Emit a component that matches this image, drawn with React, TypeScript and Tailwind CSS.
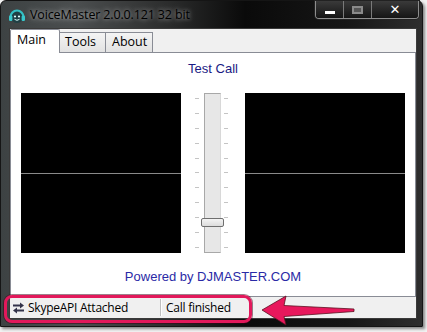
import React from "react";

const font = "font-['Liberation_Sans',Arial,sans-serif]";

function AppIcon() {
  return (
    <svg width="18" height="18" viewBox="0 0 18 18">
      <circle cx="9" cy="9.5" r="6.5" fill="#1f3f44" />
      <path d="M2.5 10 A6.5 6.5 0 0 1 15.5 10" fill="none" stroke="#33c0c4" strokeWidth="2.2" />
      <rect x="1" y="8.5" width="3.4" height="5.5" rx="1.2" fill="#38c8cc" />
      <rect x="13.6" y="8.5" width="3.4" height="5.5" rx="1.2" fill="#38c8cc" />
      <circle cx="7" cy="9.5" r="1.1" fill="#dff" />
      <circle cx="11" cy="9.5" r="1.1" fill="#dff" />
      <path d="M6.5 12.3 Q9 14.3 11.5 12.3" fill="none" stroke="#dff" strokeWidth="1" />
    </svg>
  );
}

function SwapIcon() {
  return (
    <svg width="13" height="12" viewBox="0 0 13 12">
      <path d="M1 3.5 H9" stroke="#33334a" strokeWidth="2" />
      <path d="M8 0.5 L12 3.5 L8 6.5 Z" fill="#33334a" />
      <path d="M12 8.5 H4" stroke="#33334a" strokeWidth="2" />
      <path d="M5 5.5 L1 8.5 L5 11.5 Z" fill="#33334a" />
    </svg>
  );
}

function Ticks() {
  return (
    <div className="flex flex-col justify-between h-[160px] py-[5px]">
      {Array.from({ length: 11 }).map((_, i) => (
        <div key={i} className="w-[4px] h-[1px] bg-[#c4c4c4]" />
      ))}
    </div>
  );
}

function Scope() {
  return (
    <div className="w-[160px] h-[160px] bg-black flex flex-col">
      <div className="h-[80px]" />
      <div className="h-[1px] bg-[#8a8a8a]" />
    </div>
  );
}

export default function App() {
  return (
    <div className={`w-[427px] h-[332px] bg-[#f2f2f2] relative overflow-hidden ${font}`}>
      <div className="w-[423px] h-[327px] rounded-t-[6px] border border-[#151515] flex flex-col shadow-[2px_2px_3px_rgba(0,0,0,0.45)] bg-[linear-gradient(90deg,#3d4243_0%,#4b4e4f_18%,#2b2c2c_40%,#0a0a0a_58%,#161616_82%,#2e2e2e_100%)]">
        {/* title bar */}
        <div className="h-[27px] flex items-start">
          <div className="ml-[7px] mt-[6px]">
            <AppIcon />
          </div>
          <div className="ml-[4px] mt-[6px] text-[12.5px] leading-[16px] text-black [text-shadow:0_0_4px_rgba(255,255,255,0.55),0_0_9px_rgba(255,255,255,0.35)] font-['Open_Sans',sans-serif] tracking-[-0.15px]">
            VoiceMaster 2.0.0.121 32 bit
          </div>
          <div className="ml-auto mr-[3px] flex h-[18px] border border-t-0 border-[#8d8d8d] rounded-b-[4px] overflow-hidden shadow-[0_0_0_1px_#222]">
            <div className="w-[28px] flex items-center justify-center border-r border-[#7a7a7a] bg-[linear-gradient(#3a3a3a,#151515)]">
              <div className="w-[10px] h-[3px] bg-white mt-[5px]" />
            </div>
            <div className="w-[28px] flex items-center justify-center border-r border-[#7a7a7a] bg-[linear-gradient(#3a3a3a,#151515)]">
              <div className="w-[11px] h-[8px] border-2 border-[#8a8a8a] bg-[#555]" />
            </div>
            <div className="w-[46px] flex items-center justify-center bg-[linear-gradient(#3a3a3a,#151515)] text-white font-bold text-[13px] leading-none font-['DejaVu_Sans',sans-serif]">
              ✕
            </div>
          </div>
        </div>

        {/* client */}
        <div className="ml-[8px] mr-[5px] mb-[7px] h-[291px] bg-[#f0f0f0] border border-[#3a3a3a] flex flex-col font-['Open_Sans',sans-serif]">
          {/* tabs */}
          <div className="h-[23px] flex items-end text-[12.5px] text-black relative z-10">
            <div className="w-[50px] h-[24px] -mb-[1px] bg-white border border-b-0 border-[#898c95] rounded-t-[2px] pl-[6px] pt-[1px] leading-[18px]">
              Main
            </div>
            <div className="w-[46px] h-[20px] bg-[linear-gradient(#f4f4f4,#e2e2e2)] border border-l-0 border-b-0 border-[#898c95] pl-[5px] leading-[18px]">
              Tools
            </div>
            <div className="w-[47px] h-[20px] bg-[linear-gradient(#f4f4f4,#e2e2e2)] border border-l-0 border-b-0 border-[#898c95] pl-[6px] leading-[18px]">
              About
            </div>
          </div>

          {/* panel */}
          <div className={`h-[245px] bg-white border border-[#898c95] flex flex-col items-center ${font}`}>
            <div className="mt-[8px] h-[16px] leading-[16px] text-[13px] text-[#1a1a84]">Test Call</div>
            <div className="mt-[16px] w-full px-[10px] flex">
              <Scope />
              <div className="w-[64px] h-[160px] flex relative">
                <div className="ml-[14px]">
                  <Ticks />
                </div>
                <div className="ml-[5px] w-[17px] h-[160px] bg-[#e7e7e7] border border-[#a8a8a8] border-r-[#d8d8d8]" />
                <div className="ml-[3px]">
                  <Ticks />
                </div>
                <div className="absolute left-[20px] top-[125px] w-[23px] h-[9px] rounded-[2px] border border-[#6f6f6f] bg-[linear-gradient(#f4f4f4,#dcdcdc)]" />
              </div>
              <Scope />
            </div>
            <div className="mt-[16px] h-[16px] leading-[16px] text-[13px] text-[#2a2aa6]">Powered by DJMASTER.COM</div>
          </div>

          {/* status bar */}
          <div className="flex-1 flex items-center text-[12px] tracking-[-0.25px] text-black">
            <div className="ml-[2px] w-[148px] flex items-center">
              <SwapIcon />
              <span className="ml-[3px]">SkypeAPI Attached</span>
            </div>
            <div className="w-[2px] h-[17px] border-l border-[#c0c0c0] border-r border-r-white" />
            <span className="ml-[4px]">Call finished</span>
          </div>
        </div>
      </div>

      {/* annotation box */}
      <div className="absolute left-[4px] top-[295px] w-[248px] h-[28px] rounded-[8px] border-[3px] border-[#e2185b] shadow-[0_0_0_1px_rgba(60,0,20,0.5)]" />
      {/* annotation arrow */}
      <svg className="absolute left-[258px] top-[292px]" width="100" height="36" viewBox="0 0 100 36">
        <path
          d="M4 18 L28 4 L26 13.5 L96 17 L96 19.5 L26 24.5 L28 33 Z"
          fill="#e8185c"
          stroke="#5a1020"
          strokeWidth="0.8"
          strokeLinejoin="round"
        />
      </svg>
    </div>
  );
}
